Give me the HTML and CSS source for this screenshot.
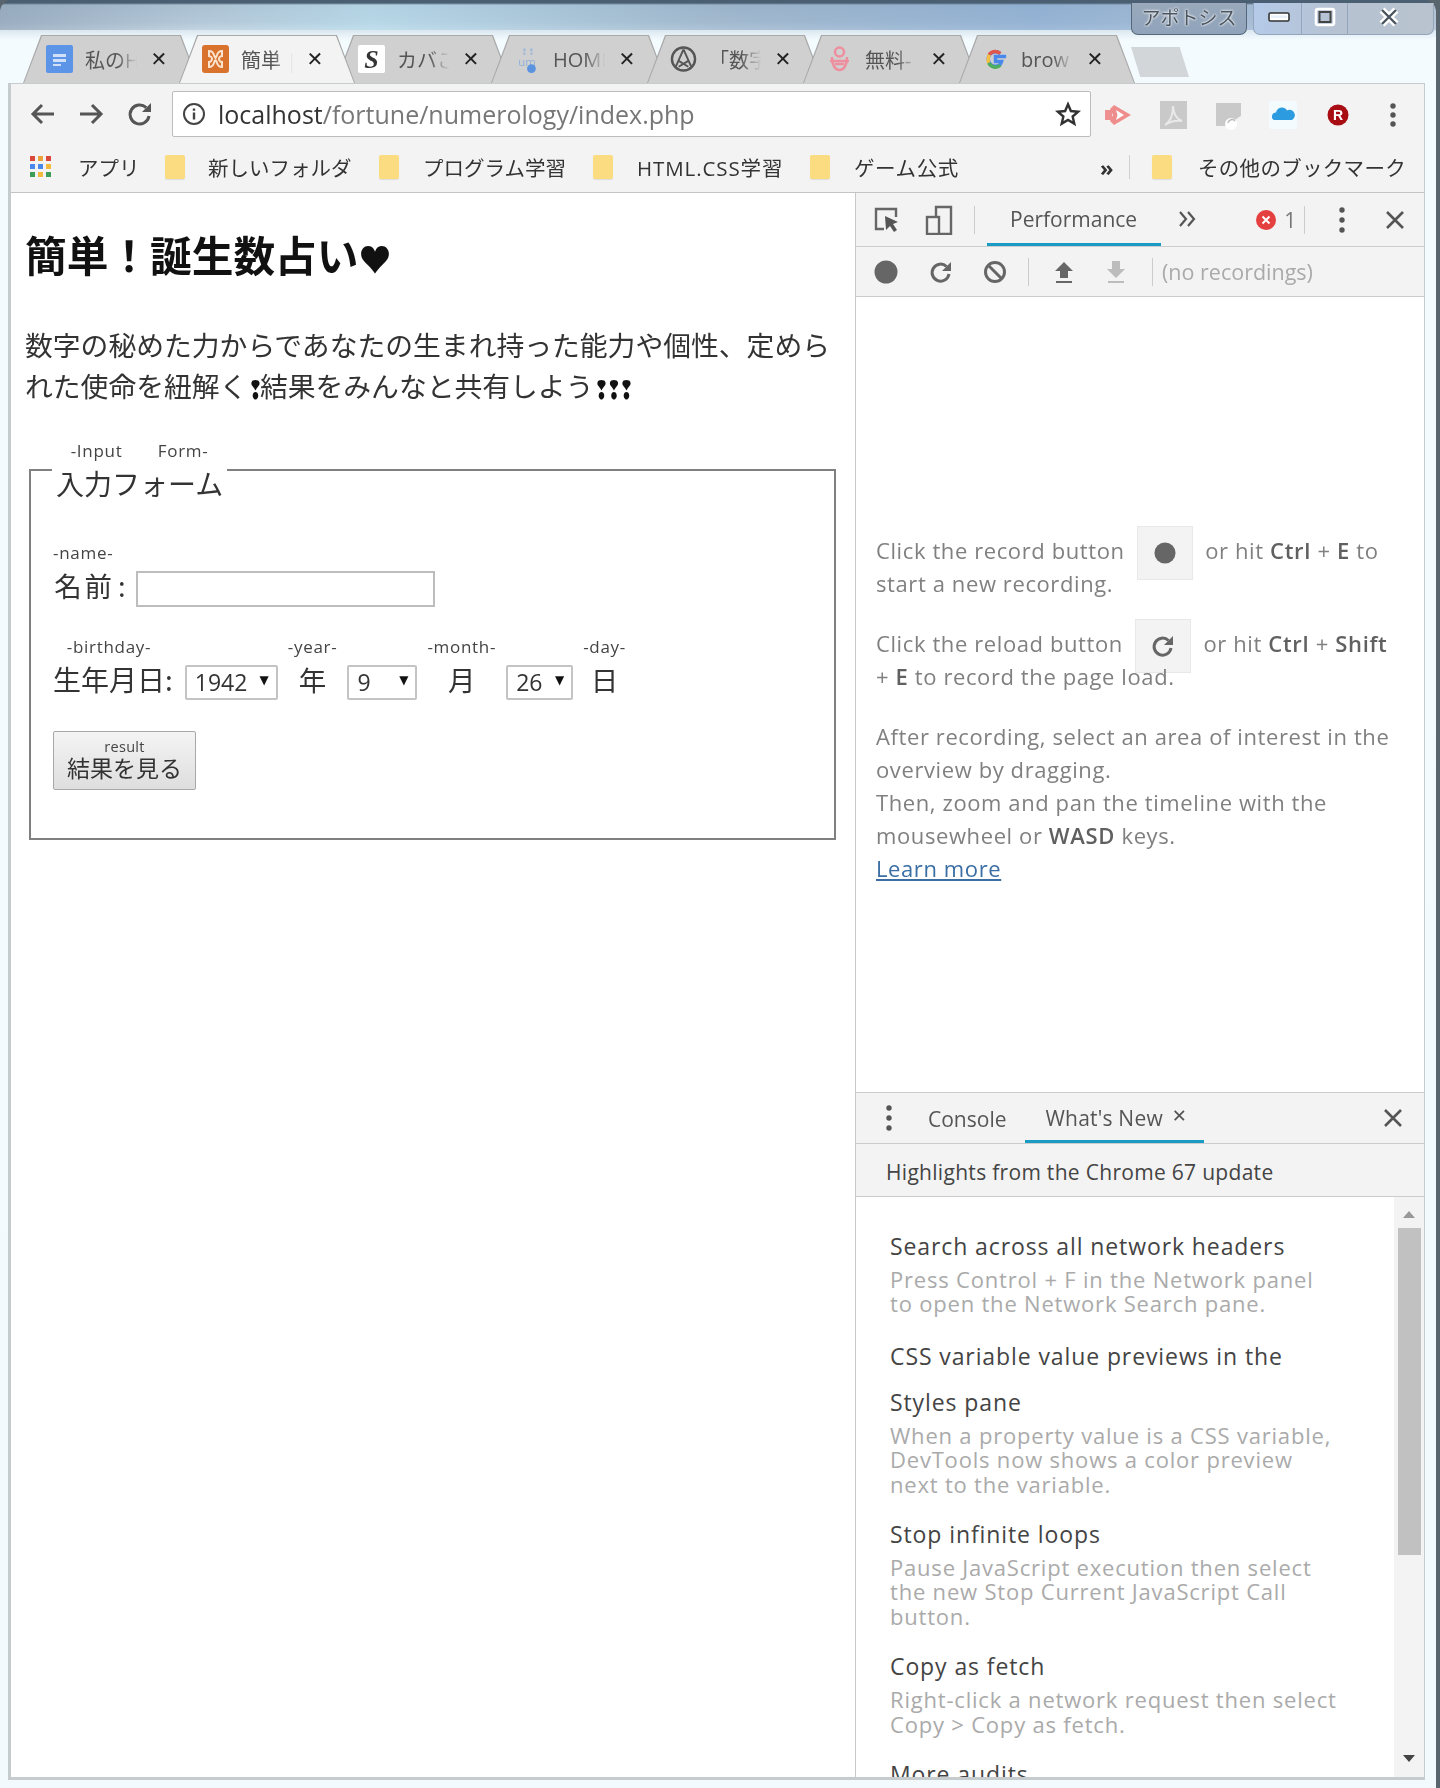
FILE: index.html
```html
<!DOCTYPE html>
<html lang="ja">
<head>
<meta charset="utf-8">
<title>簡単！誕生数占い</title>
<link rel="stylesheet" href="styles.css">
</head>
<body>
<div class="window">
  <div class="caption">
    <div class="capname">アポトシス</div>
    <div class="capctrl">
      <span class="cc cc-a"><svg width="22" height="10" viewBox="0 0 22 10"><rect x="1" y="1" width="20" height="8" rx="1.500" fill="#fff" stroke="#333" stroke-width="1.600"/><rect x="3" y="3.500" width="16" height="2.500" fill="#e8f0fa"/></svg></span>
      <span class="cc cc-a"><svg width="22" height="20" viewBox="0 0 22 20"><rect x="2" y="2" width="18" height="16" rx="2" fill="none" stroke="#fff" stroke-width="2.600"/><rect x="5.500" y="5" width="11" height="10" fill="none" stroke="#444" stroke-width="2"/></svg></span>
      <span class="cc cc-x"><svg width="22" height="20" viewBox="0 0 22 20"><path d="M4 3l14 14M18 3L4 17" stroke="#fff" stroke-width="7"/><path d="M4 3l14 14M18 3L4 17" stroke="#4a5560" stroke-width="2.400"/></svg></span>
    </div>
  </div>

  <div class="tabs">
    <div class="tab">
      <svg class="fav" viewBox="0 0 27 28"><rect width="27" height="28" rx="2" fill="#5c94e8"/><path d="M7 9h13v3H7zM7 14h13v3H7zM7 19h8v2H7z" fill="#cfe0f8"/></svg>
      <span class="ttl">私のH</span><span class="x">✕</span>
    </div>
    <div class="tab active">
      <svg class="fav" viewBox="0 0 27 28"><rect width="27" height="28" rx="3" fill="#d9722c"/><path d="M7 6c6 0 4 5 6.500 7C16 11 14 6 20 6v5c-2 0-3 2-3 3s1 3 3 3v5c-6 0-4-5-6.500-7C11 17 13 22 7 22v-5c2 0 3-2 3-3s-1-3-3-3z" fill="none" stroke="#fbe3cf" stroke-width="2"/></svg>
      <span class="ttl">簡単 |</span><span class="x">✕</span>
    </div>
    <div class="tab">
      <svg class="fav" viewBox="0 0 27 28"><rect width="27" height="28" rx="2" fill="#fff"/><text x="13.500" y="23" text-anchor="middle" class="fav-s">S</text></svg>
      <span class="ttl">カバこ</span><span class="x">✕</span>
    </div>
    <div class="tab">
      <svg class="fav" viewBox="0 0 27 32"><path d="M10 4v7M18 4v7" stroke="#9db8d8" stroke-width="2.500" stroke-dasharray="3 1.500"/><text x="13" y="24" text-anchor="middle" class="fav-um">um</text><circle cx="18" cy="27" r="5" fill="#5b93e0"/></svg>
      <span class="ttl">HOMI</span><span class="x">✕</span>
    </div>
    <div class="tab">
      <svg class="fav" viewBox="0 0 28 28"><circle cx="14" cy="14" r="12" fill="none" stroke="#555" stroke-width="2.500"/><path d="M14 4L6 22M14 4l8 18M9 16l10 6M19 16L9 22" fill="none" stroke="#555" stroke-width="2"/></svg>
      <span class="ttl">「数字</span><span class="x">✕</span>
    </div>
    <div class="tab">
      <svg class="fav" viewBox="0 0 27 28"><circle cx="13.500" cy="7" r="4.500" fill="none" stroke="#ee8f9f" stroke-width="2.500"/><path d="M6 12c0 8 3 13 7.500 13S21 20 21 12M4 16h19M9 19l9 0" fill="none" stroke="#ee8f9f" stroke-width="2.500"/></svg>
      <span class="ttl">無料-</span><span class="x">✕</span>
    </div>
    <div class="tab">
      <svg class="fav" viewBox="0 0 28 28"><path d="M25 11.500H14v5h6.300c-.9 3-3.300 5-6.300 5a7.500 7.500 0 0 1 0-15c1.900 0 3.600.7 4.900 1.900" fill="none" stroke="#4a88ec" stroke-width="3.600"/><path d="M7.500 9.500A7.500 7.500 0 0 1 19 8.400" fill="none" stroke="#e2574b" stroke-width="3.600"/><path d="M7 18a7.500 7.500 0 0 1-.5-4.500c0-1.500.4-2.800 1-4" fill="none" stroke="#f5bf42" stroke-width="3.600"/><path d="M7 18a7.500 7.500 0 0 0 12 2.400" fill="none" stroke="#4fae5c" stroke-width="3.600"/></svg>
      <span class="ttl">brow</span><span class="x">✕</span>
    </div>
    <div class="newtab"></div>
  </div>

  <div class="chrome">
    <div class="toolbar">
      <svg class="tb tb-back" viewBox="0 0 28 28"><path d="M25 14H5M13 5l-9 9 9 9" fill="none" stroke="#555" stroke-width="3"/></svg>
      <svg class="tb tb-fwd" viewBox="0 0 28 28"><path d="M3 14h20M15 5l9 9-9 9" fill="none" stroke="#555" stroke-width="3"/></svg>
      <svg class="tb tb-rel" viewBox="0 0 28 28"><path d="M23 16a9.500 9.500 0 1 1-2.800-8.400" fill="none" stroke="#555" stroke-width="3"/><path d="M25 3v9h-9z" fill="#555"/></svg>
      <div class="omnibox">
        <svg class="info" viewBox="0 0 24 24"><circle cx="12" cy="12" r="10" fill="none" stroke="#444" stroke-width="2"/><path d="M12 10.500v7M12 6.500v2.200" stroke="#444" stroke-width="2.400"/></svg>
        <span class="url"><span class="host">localhost</span>/fortune/numerology/index.php</span>
        <svg class="star" viewBox="0 0 28 28"><path d="M14 3.500l3.100 7.300 7.900.7-6 5.200 1.800 7.700-6.800-4.100-6.800 4.100 1.800-7.700-6-5.200 7.900-.7z" fill="none" stroke="#333" stroke-width="2.600"/></svg>
      </div>
      <div class="exts">
        <svg class="ext" viewBox="0 0 30 30"><path d="M2 10h7v10H2z" fill="#ef9090"/><path d="M11 5l17 10-17 10-4-4 3-6-3-6z" fill="#ef8d8d"/><path d="M13 10l8 5-8 5 1.500-5z" fill="#fff"/></svg>
        <svg class="ext" viewBox="0 0 30 30"><rect x="2" y="1" width="27" height="28" fill="#c9c9c9"/><path d="M7 25c5-3 8-9 8-19 .5 8 3 13 9 15-6-1-11 0-17 4z" fill="none" stroke="#e9e9e9" stroke-width="2"/></svg>
        <svg class="ext" viewBox="0 0 30 30"><path d="M3 3h25v13c-3 2-6 3-7 6l-3 4H3z" fill="#c9c9c9"/><circle cx="18" cy="24" r="6" fill="#fff"/><path d="M15 23a4 4 0 0 1 7-2" fill="none" stroke="#bbb" stroke-width="1.500"/></svg>
        <svg class="ext" viewBox="0 0 30 30"><rect x="1" y="1" width="28" height="28" rx="3" fill="#f3fbff"/><path d="M6 20a4 4 0 0 1 2-7.500c1-5 8-7 11-2a5 5 0 0 1 5 9.500z" fill="#2d9be0"/></svg>
        <svg class="ext" viewBox="0 0 30 30"><circle cx="15" cy="15" r="10.500" fill="#a80d14"/><text x="15" y="20" text-anchor="middle" class="ext-r">R</text></svg>
        <svg class="ext ext-last" viewBox="0 0 30 30"><circle cx="15" cy="6" r="2.700" fill="#555"/><circle cx="15" cy="15" r="2.700" fill="#555"/><circle cx="15" cy="24" r="2.700" fill="#555"/></svg>
      </div>
    </div>

    <div class="bookmarks">
      <svg class="apps" viewBox="0 0 24 24"><rect x="1" y="1" width="5" height="5" fill="#d8483b"/><rect x="9" y="1" width="5" height="5" fill="#e8a33a"/><rect x="17" y="1" width="5" height="5" fill="#d8483b"/><rect x="1" y="9" width="5" height="5" fill="#4a88ec"/><rect x="9" y="9" width="5" height="5" fill="#4a88ec"/><rect x="17" y="9" width="5" height="5" fill="#f0bb3f"/><rect x="1" y="17" width="5" height="5" fill="#3d9c55"/><rect x="9" y="17" width="5" height="5" fill="#f0bb3f"/><rect x="17" y="17" width="5" height="5" fill="#3d9c55"/></svg>
      <span class="bm b-apps">アプリ</span>
      <span class="folder f1"></span><span class="bm b-2">新しいフォルダ</span>
      <span class="folder f2"></span><span class="bm b-3">プログラム学習</span>
      <span class="folder f3"></span><span class="bm b-4">HTML.CSS学習</span>
      <span class="folder f4"></span><span class="bm b-5">ゲーム公式</span>
      <span class="more">»</span>
      <span class="bm-sep"></span>
      <span class="folder f5"></span><span class="bm b-6">その他のブックマーク</span>
    </div>

    <div class="main">
      <div class="page">
        <h1 class="title">簡単！誕生数占い<span class="heart">♥</span></h1>
        <p class="lead">数字の秘めた力からであなたの生まれ持った能力や個性、定められた使命を紐解く<span class="ex">❢</span>結果をみんなと共有しよう<span class="ex">❢</span><span class="ex">❢</span><span class="ex">❢</span></p>
        <form class="form">
          <fieldset class="fset">
            <legend class="leg"><ruby>入力フォーム<rt><span class="rtx">-Input　　Form-</span></rt></ruby></legend>
            <div class="row row-name">
              <label class="lbl lbl-n" for="nm"><ruby class="rb-name">名前<rt><span class="rtx">-name-</span></rt></ruby>:</label>
              <input id="nm" class="inp" type="text">
            </div>
            <div class="row row-birth">
              <span class="lbl lbl-b"><ruby>生年月日<rt><span class="rtx">-birthday-</span></rt></ruby>:</span>
              <span class="sel sel-y"><select><option>1942</option></select></span>
              <span class="lbl"><ruby>年<rt><span class="rtx">-year-</span></rt></ruby></span>
              <span class="sel sel-m"><select><option>9</option></select></span>
              <span class="lbl"><ruby>月<rt><span class="rtx">-month-</span></rt></ruby></span>
              <span class="sel sel-d"><select><option>26</option></select></span>
              <span class="lbl"><ruby>日<rt><span class="rtx">-day-</span></rt></ruby></span>
            </div>
            <button class="btn" type="button"><ruby>結果を見る<rt>result</rt></ruby></button>
          </fieldset>
        </form>
      </div>

      <div class="devtools">
        <div class="dt-bar">
          <svg class="d-ic i-insp" viewBox="0 0 28 28"><path d="M11 23H3V3h20v8" fill="none" stroke="#666" stroke-width="2.400"/><path d="M12 10l13 6-5 2 4 6-3 2-4-6-4 4z" fill="#555"/></svg>
          <svg class="d-ic i-dev" viewBox="0 0 28 30"><path d="M11 11V2h15v27H14" fill="none" stroke="#666" stroke-width="2.400"/><rect x="2" y="12" width="12" height="17" fill="none" stroke="#666" stroke-width="2.400"/></svg>
          <span class="dt-sep s-a"></span>
          <span class="dt-tab t-perf">Performance</span>
          <svg class="d-ic chev" viewBox="0 0 20 18"><path d="M3 2l6 7-6 7M11 2l6 7-6 7" fill="none" stroke="#555" stroke-width="2.200"/></svg>
          <svg class="d-ic i-err" viewBox="0 0 20 20"><circle cx="10" cy="10" r="10" fill="#e3403f"/><path d="M6.500 6.500l7 7M13.500 6.500l-7 7" stroke="#fff" stroke-width="2"/></svg>
          <span class="errn">1</span>
          <span class="dt-sep s-b"></span>
          <svg class="d-ic i-dots" viewBox="0 0 8 26"><circle cx="4" cy="3" r="2.700" fill="#555"/><circle cx="4" cy="13" r="2.700" fill="#555"/><circle cx="4" cy="23" r="2.700" fill="#555"/></svg>
          <svg class="d-ic i-close" viewBox="0 0 20 20"><path d="M2 2l16 16M18 2L2 18" stroke="#555" stroke-width="2.600"/></svg>
        </div>
        <div class="dt-bar dt-bar2">
          <svg class="d-ic i-rec" viewBox="0 0 24 24"><circle cx="12" cy="12" r="11.500" fill="#666"/></svg>
          <svg class="d-ic i-rl" viewBox="0 0 24 24"><path d="M20 14a8.500 8.500 0 1 1-2.500-7.500" fill="none" stroke="#666" stroke-width="3"/><path d="M22 2v9h-9z" fill="#666"/></svg>
          <svg class="d-ic i-clr" viewBox="0 0 24 24"><circle cx="12" cy="12" r="9.500" fill="none" stroke="#666" stroke-width="3"/><path d="M5.500 5.500l13 13" stroke="#666" stroke-width="3"/></svg>
          <span class="dt-sep s-c"></span>
          <svg class="d-ic i-up" viewBox="0 0 24 24"><path d="M12 2l9 9h-5v7H8v-7H3zM4 21h16v2H4z" fill="#666"/></svg>
          <svg class="d-ic i-dn" viewBox="0 0 24 24"><path d="M8 1h8v8h5l-9 9-9-9h5zM4 21h16v2H4z" fill="#bcbcbc"/></svg>
          <span class="dt-sep s-d"></span>
          <span class="norec">(no recordings)</span>
        </div>
        <div class="landing">
          <p class="hint">Click the record button <span class="kbtn"><svg width="22" height="22" viewBox="0 0 24 24"><circle cx="12" cy="12" r="11.500" fill="#666"/></svg></span> or hit <b>Ctrl</b> + <b>E</b> to start a new recording.</p>
          <p class="hint">Click the reload button <span class="kbtn"><svg width="24" height="24" viewBox="0 0 24 24"><path d="M20 14a8.500 8.500 0 1 1-2.500-7.500" fill="none" stroke="#666" stroke-width="3"/><path d="M22 2v9h-9z" fill="#666"/></svg></span> or hit <b>Ctrl</b> + <b>Shift</b> + <b>E</b> to record the page load.</p>
          <p class="hint">After recording, select an area of interest in the overview by dragging.<br>Then, zoom and pan the timeline with the mousewheel or <b>WASD</b> keys.<br><a class="lnk" href="#">Learn more</a></p>
        </div>
        <div class="dt-bar dt-bar3">
          <svg class="d-ic i-dots2" viewBox="0 0 8 26"><circle cx="4" cy="3" r="2.700" fill="#555"/><circle cx="4" cy="13" r="2.700" fill="#555"/><circle cx="4" cy="23" r="2.700" fill="#555"/></svg>
          <span class="dt-tab t-con">Console</span>
          <span class="dt-tab t-new">What's New <span class="tx">✕</span></span>
          <svg class="d-ic i-close2" viewBox="0 0 20 20"><path d="M2 2l16 16M18 2L2 18" stroke="#555" stroke-width="2.600"/></svg>
        </div>
        <div class="dt-bar dt-bar4">Highlights from the Chrome 67 update</div>
        <div class="news">
          <div class="news-list">
            <h3 class="n-t">Search across all network headers</h3>
            <p class="n-b">Press Control + F in the Network panel<br>to open the Network Search pane.</p>
            <h3 class="n-t">CSS variable value previews in the<br>Styles pane</h3>
            <p class="n-b">When a property value is a CSS variable,<br>DevTools now shows a color preview<br>next to the variable.</p>
            <h3 class="n-t">Stop infinite loops</h3>
            <p class="n-b">Pause JavaScript execution then select<br>the new Stop Current JavaScript Call<br>button.</p>
            <h3 class="n-t">Copy as fetch</h3>
            <p class="n-b">Right-click a network request then select<br>Copy &gt; Copy as fetch.</p>
            <h3 class="n-t">More audits</h3>
          </div>
          <div class="sbar">
            <span class="arr arr-up"></span>
            <span class="thumb"></span>
            <span class="arr arr-dn"></span>
          </div>
        </div>
      </div>
    </div>
  </div>
</div>
</body>
</html>
```

FILE: styles.css
```css
* { box-sizing: border-box; }
html, body { margin: 0; height: 100%; }
body { overflow: hidden; background: #59656e; }
.window {
  height: 1788px;
  width: 1436px;
  display: flex;
  flex-direction: column;
  padding: 0 11px 8px 8px;
  border-radius: 12px 12px 0 0;
  font-family: "Open Sans", "Noto Sans CJK JP", sans-serif;
  filter: blur(0.55px);
  background:
    linear-gradient(180deg, #4b5f72 0, #4b5f72 3px, rgba(255,255,255,0) 5px),
    linear-gradient(90deg, rgba(120,140,165,.55) 0, rgba(120,150,180,.22) 14%, rgba(170,215,235,.5) 26%, rgba(110,140,175,.4) 50%, rgba(110,150,200,.55) 72%, rgba(170,185,205,.6) 100%) 0 0 / 100% 30px no-repeat,
    linear-gradient(180deg, #b8cbd9 0, #c4d6e2 22px, #f4fbff 40px, #f2fafd 100%);
}

/* caption */
.caption { height: 35px; display: flex; justify-content: flex-end; padding-top: 3px; margin-right: -9px; gap: 6px; flex: none; }
.capname {
  width: 116px; border: 1px solid #56677a; border-top: 0; border-radius: 0 0 7px 7px;
  background: linear-gradient(180deg, #9aa9bb, #8fa3bb);
  font-size: 19px; line-height: 30px; text-align: center; color: #4a5560;
  text-shadow: 0 0 2px #fff, 0 0 3px #fff;
}
.capctrl { width: 181px; display: flex; padding-left: 2px; border: 1px solid #93a6bc; border-top: 0; border-radius: 0 0 7px 7px; background: linear-gradient(90deg, #b4cae8, #b6c2d2 45%, #b9c3cf); }
.cc { display: flex; align-items: center; justify-content: center; border-right: 1px solid #94a6ba; padding-bottom: 4px; }
.cc-a { width: 46px; flex: none; }
.cc-x { flex: 1; border-right: 0; padding-right: 4px; }

/* tabs */
.tabs { height: 48px; flex: none; display: flex; padding-left: 15px; }
.tab {
  position: relative; width: 176px; margin-right: -20px; flex: none;
  display: flex; align-items: center; padding: 0 0 0 23px; z-index: 1;
  clip-path: polygon(0 100%, 18px 0, calc(100% - 18px) 0, 100% 100%);
  background: #a8a8a8;
  font-size: 20px; color: #333;
}
.tab::before {
  content: ""; position: absolute; inset: 1px 1px 0 1px; z-index: -1;
  clip-path: polygon(0 100%, 18px 0, calc(100% - 18px) 0, 100% 100%);
  background: #d0d0d0;
}
.tab.active { z-index: 2; }
.tab.active::before { background: #f3f3f3; }
.fav { width: 27px; height: 28px; flex: none; margin-right: 12px; }
.fav-s { font: bold 26px "Liberation Serif", serif; font-style: italic; fill: #333; }
.fav-um { font: 13px "Open Sans", sans-serif; fill: #8fb0d8; }
.ttl {
  width: 58px; overflow: hidden; white-space: nowrap; flex: none;
  -webkit-mask-image: linear-gradient(90deg, #000 55%, transparent 90%);
  mask-image: linear-gradient(90deg, #000 55%, transparent 90%);
  color: #555;
}
.x { width: 24px; margin-left: 4px; text-align: center; font-size: 20px; font-weight: bold; color: #222; font-family: "DejaVu Sans", sans-serif; }
.newtab {
  width: 58px; height: 30px; margin: 12px 0 0 16px; flex: none;
  background: #d2d6d8;
  clip-path: polygon(0 0, 84% 0, 100% 100%, 16% 100%);
}

/* chrome */
.chrome {
  flex: 1; min-height: 0; display: flex; flex-direction: column;
  background: #f3f3f3; border: solid #c6cbce; border-width: 1px 1px 3px 3px;
}
.toolbar { height: 59px; flex: none; display: flex; align-items: center; padding-left: 18px; }
.tb { width: 28px; height: 28px; flex: none; }
.tb-fwd { margin-left: 20px; }
.tb-rel { margin-left: 21px; }
.omnibox {
  width: 919px; height: 46px; margin-left: 18px; flex: none;
  display: flex; align-items: center; padding: 0 9px 0 9px;
  background: #fff; border: 1px solid #bcbcbc; border-radius: 2px;
}
.info { width: 24px; height: 24px; flex: none; }
.url { flex: 1; margin-left: 12px; font-size: 25px; color: #777; font-family: "Open Sans", sans-serif; }
.host { color: #333; }
.star { width: 26px; height: 26px; flex: none; }
.exts { display: flex; flex: 1; padding: 2px 0 0 12px; }
.ext { width: 30px; height: 30px; flex: none; margin-right: 25px; }
.ext-last { margin-right: 0; }

.bookmarks { height: 50px; flex: none; display: flex; align-items: center; padding-left: 18px; padding-bottom: 1px; border-bottom: 1px solid #c4c4c4; font-size: 20.500px; color: #333; }
.apps { width: 24px; height: 24px; flex: none; }
.bm { white-space: nowrap; }
.b-apps { margin-left: 25px; width: 62px; }
.folder { width: 20px; height: 24px; flex: none; border-radius: 2px; background: #fbdc80; box-shadow: 0 1px 1px #ddd; }
.f1 { margin-left: 25px; }
.b-2 { margin-left: 23px; width: 143px; }
.f2 { margin-left: 28px; }
.b-3 { margin-left: 24px; width: 143px; }
.f3 { margin-left: 27px; }
.b-4 { margin-left: 24px; width: 158px; letter-spacing: .9px; }
.f4 { margin-left: 15px; }
.b-5 { margin-left: 24px; width: 105px; letter-spacing: .6px; }
.more { margin-left: 141px; font-weight: bold; width: 15px; font-size: 22px; }
.bm-sep { width: 1px; height: 24px; background: #d0d0d0; margin-left: 14px; }
.f5 { margin-left: 22px; }
.b-6 { margin-left: 26px; letter-spacing: .3px; }

/* page */
.main { flex: 1; min-height: 0; display: flex; background: #fff; }
.page { width: 844px; flex: none; padding: 0 0 0 14px; color: #222; font-family: "Noto Sans CJK JP", sans-serif; }
.title { margin: 36px 0 0; font-size: 41.700px; line-height: 50px; font-weight: 700; color: #111; white-space: nowrap; }
.heart { font-size: 33px; }
.lead { margin: 41px 0 0; width: 812px; font-size: 27.800px; line-height: 41px; color: #333; }
.ex { display: inline-block; width: 12.500px; text-align: center; font-family: "DejaVu Sans", sans-serif; font-weight: bold; font-size: 19px; line-height: 1; color: #111; transform: scaleY(1.350); }
.form { margin: 0; }
.fset {
  margin: 26px 0 0 4px; padding: 26px 0 0 22px; width: 807px; height: 408px;
  border: 2px solid #808080; min-width: 0;
}
.leg { padding: 0 4px 5px; margin-left: -1px; font-size: 28px; line-height: 40px; color: #333; }
.rtx { display: inline-block; }
ruby { ruby-position: over; }
rt { font-size: 17px; line-height: 38px; letter-spacing: .7px; color: #444; font-family: "Open Sans", sans-serif; }
.row { display: flex; font-size: 27.500px; line-height: 40px; color: #333; }
.row-name { gap: 10px; align-items: flex-end; }
.lbl-n { margin-bottom: 2px; }
.rb-name { margin-right: 6px; }
.row-birth { margin-top: 21px; gap: 10px; align-items: baseline; }
.lbl { white-space: nowrap; }
.lbl-b { margin-right: 2px; font-size: 28px; }
.inp { width: 299px; height: 36px; border: 2px solid #bdbdbd; background: #fff; padding: 0; }
.sel { position: relative; display: inline-block; }
.sel select {
  display: block; height: 35px; padding: 0 0 0 8px; appearance: none; -webkit-appearance: none;
  background: #fff; border: 2px solid #c4c4c4; border-radius: 2px;
  font: 23px/31px "Open Sans", sans-serif; color: #333;
}
.sel::after { content: "▼"; position: absolute; right: 9px; top: 7px; font: 12px/16px "DejaVu Sans", sans-serif; color: #111; pointer-events: none; }
.sel-y select { width: 93px; }
.sel-m select { width: 70px; }
.sel-d select { width: 67px; }
.btn {
  display: block; width: 143px; height: 59px; margin-top: 31px; padding: 0;
  background: linear-gradient(180deg, #f4f4f4, #dedede);
  border: 1px solid #a8a8a8; border-radius: 2px;
  font: 23px/28px "Noto Sans CJK JP", sans-serif; color: #333;
}
.btn rt { font-size: 14.500px; line-height: 14px; letter-spacing: .3px; }

/* devtools */
.devtools { flex: 1; min-width: 0; display: flex; flex-direction: column; border-left: 1px solid #c8c8c8; color: #555; font-size: 21px; }
.dt-bar { height: 54px; flex: none; display: flex; align-items: center; background: #f3f3f3; border-bottom: 1px solid #ccc; }
.dt-bar2 { height: 50px; }
.dt-bar3 { height: 52px; border-top: 1px solid #ccc; }
.dt-bar4 { height: 53px; padding: 3px 0 0 30px; color: #444; font-size: 21px; letter-spacing: .3px; }
.d-ic { flex: none; }
.i-insp { width: 28px; height: 28px; margin-left: 17px; }
.i-dev { width: 28px; height: 30px; margin-left: 24px; }
.dt-sep { width: 1px; height: 28px; background: #ccc; flex: none; }
.s-a { margin-left: 21px; }
.dt-tab { align-self: stretch; display: flex; align-items: center; white-space: nowrap; }
.t-perf { margin-left: 12px; padding: 2px 24px 0 23px; border-bottom: 3px solid #1a9bc4; }
.chev { width: 20px; height: 18px; margin-left: 16px; margin-top: -2px; }
.i-err { width: 20px; height: 20px; margin-left: 59px; }
.errn { margin-left: 8px; width: 16px; color: #777; }
.s-b { margin-left: 4px; }
.i-dots { width: 8px; height: 26px; margin-left: 33px; }
.i-close { width: 20px; height: 20px; margin-left: 39px; }
.i-rec { width: 24px; height: 24px; margin-left: 18px; }
.i-rl { width: 24px; height: 24px; margin-left: 31px; }
.i-clr { width: 24px; height: 24px; margin-left: 30px; }
.s-c { margin-left: 21px; }
.i-up { width: 24px; height: 24px; margin-left: 23px; }
.i-dn { width: 24px; height: 24px; margin-left: 28px; }
.s-d { margin-left: 24px; }
.norec { margin-left: 9px; color: #aaa; font-size: 21.500px; }

.landing { height: 795px; flex: none; display: flex; flex-direction: column; justify-content: center; padding: 30px 24px 0 20px; background: #fff; color: #808080; font-size: 22px; letter-spacing: .6px; line-height: 33px; }
.hint { margin: 0 0 27px; }
.hint:last-child { margin-bottom: 0; }
.hint b { color: #606060; font-weight: 600; letter-spacing: .7px; }
.kbtn { display: inline-flex; align-items: center; justify-content: center; width: 56px; height: 54px; margin: -14px 6px -14px; vertical-align: middle; background: #f3f3f3; border: 1px solid #e8e8e8; }
.lnk { color: #3a6ea5; }

.t-con { margin-left: 35px; padding-top: 2px; }
.i-dots2 { width: 8px; height: 26px; margin-left: 29px; }
.t-new { margin-left: 19px; padding: 2px 17px 0 20px; border-bottom: 3px solid #1a9bc4; letter-spacing: .2px; }
.tx { font-size: 18px; margin-left: 9px; font-family: "DejaVu Sans", sans-serif; margin-top: -4px; }
.i-close2 { width: 20px; height: 20px; margin-left: auto; margin-right: 21px; }

.news { flex: 1; min-height: 0; display: flex; background: #fff; overflow: hidden; }
.news-list { flex: 1; min-width: 0; padding: 26px 0 0 34px; overflow: hidden; }
.n-t { margin: 0; font-size: 23px; letter-spacing: .9px; line-height: 46px; font-weight: 400; color: #444; white-space: nowrap; }
.n-b { margin: -2px 0 15px; font-size: 22px; letter-spacing: .8px; line-height: 24.400px; color: #aaa; white-space: nowrap; }
.n-b:first-of-type { margin-bottom: 17px; }
.sbar { width: 30px; flex: none; display: flex; flex-direction: column; align-items: center; background: #f3f3f3; }
.arr { width: 0; height: 0; border: 6px solid transparent; border-top: 0; border-bottom: 7px solid #999; }
.arr-up { margin-top: 14px; }
.thumb { width: 23px; height: 327px; margin-top: 10px; background: #c1c1c1; }
.arr-dn { margin-top: auto; margin-bottom: 15px; border-bottom: 0; border-top: 7px solid #444; }
.ext-r { font: bold 14px "Liberation Sans", sans-serif; fill: #fff; }
```
